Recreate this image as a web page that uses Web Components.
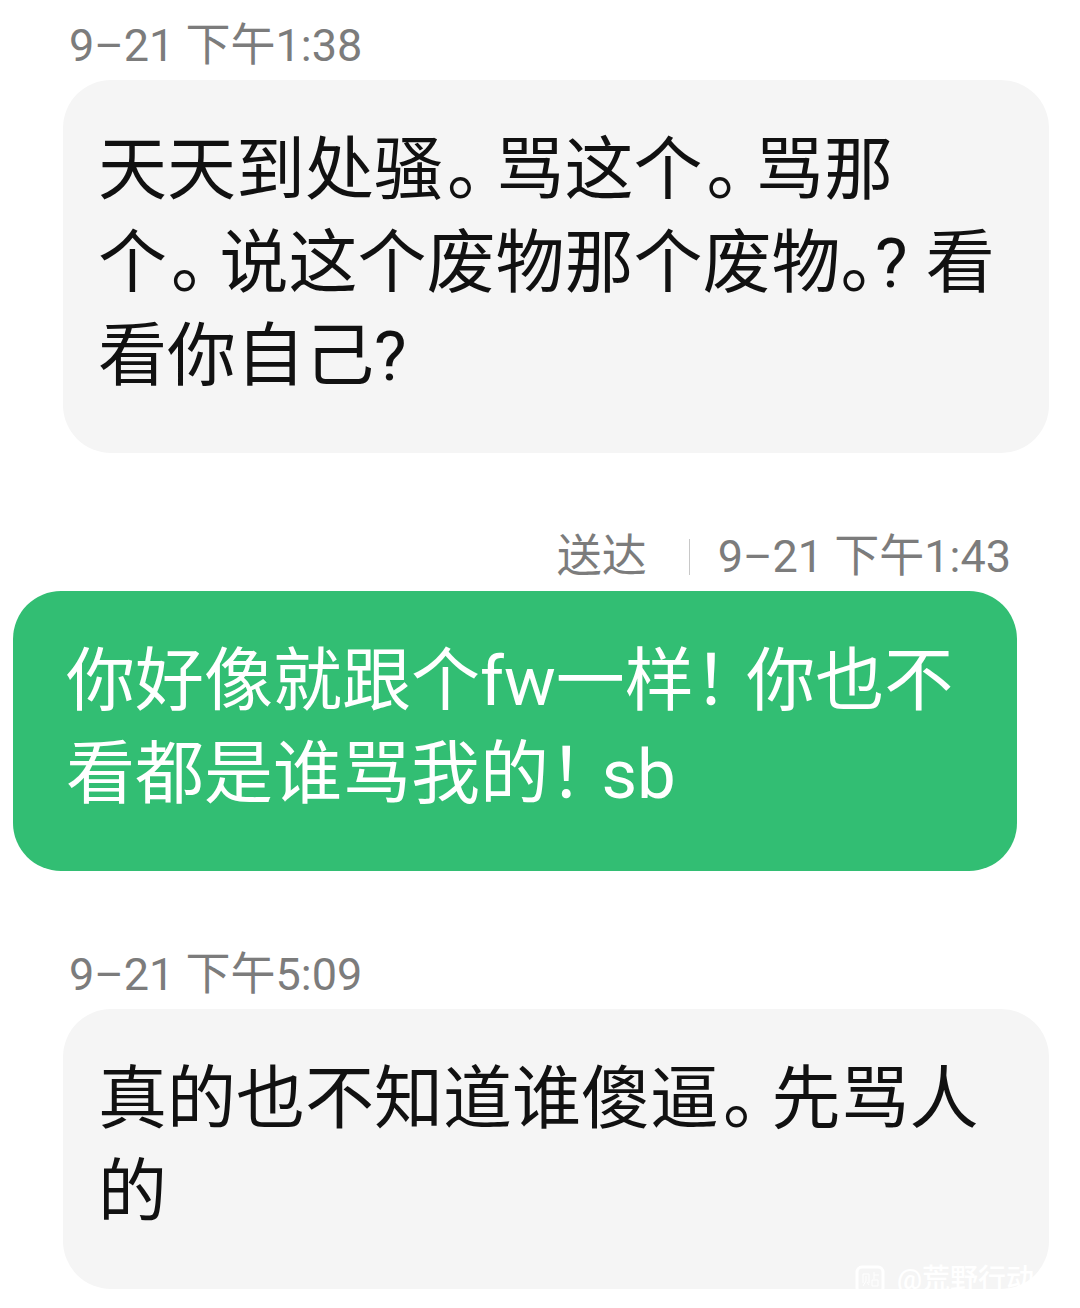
<!DOCTYPE html>
<html lang="zh-CN">
<head>
  <meta charset="UTF-8">
  <meta name="viewport" content="width=device-width, initial-scale=1.0">
  <title>短信</title>
  <style>
    body {
      margin: 0;
      background: #fff;
      font-family: Roboto, "Noto Sans CJK SC", sans-serif;
    }
  </style>
</head>
<body>
  <message-thread>
    <sms-message time="9–21 下午1:38">天天到处骚<span class="stop">。</span>骂这个<span class="stop">。</span>骂那个<span class="stop">。</span>说这个废物那个废物。<span class="mark">?</span>看看你自己?</sms-message>
    <sms-message sent status="送达" time="9–21 下午1:43">你好像就跟个fw一样<span class="mark">&#xff01;</span>你也不看都是谁骂我的<span class="mark">&#xff01;</span>sb</sms-message>
    <sms-message time="9–21 下午5:09">真的也不知道谁傻逼<span class="stop">。</span>先骂人的</sms-message>
    <tieba-watermark slot="overlay">@荒野行动</tieba-watermark>
  </message-thread>

  <script>
    class MessageThread extends HTMLElement {
      connectedCallback() {
        this.attachShadow({ mode: 'open' });
        this.shadowRoot.innerHTML = `
          <style>
            :host {
              display: block;
              position: relative;
              overflow: hidden;
            }
            main {
              display: flex;
              flex-direction: column;
              gap: 76px;
              padding: 18px 0 19px;
            }
          </style>
          <main><slot></slot></main>
          <slot name="overlay"></slot>
        `;
      }
    }

    class SmsMessage extends HTMLElement {
      connectedCallback() {
        const status = this.getAttribute('status');
        this.attachShadow({ mode: 'open' });
        this.shadowRoot.innerHTML = `
          <style>
            :host {
              display: block;
              margin: 0 31px 0 63px;
            }
            :host([sent]) {
              margin: 0 63px 0 13px;
            }
            .meta {
              display: flex;
              align-items: center;
              padding: 0 6px 6px;
              color: #7c7c7c;
              font-size: 45px;
              line-height: 56px;
            }
            :host([sent]) .meta {
              justify-content: flex-end;
            }
            .status {
              padding-right: 42px;
            }
            .divider {
              width: 1px;
              height: 36px;
              margin-right: 28px;
              background: #c8c8c8;
            }
            .bubble {
              margin: 0;
              padding: 44px 35px 50px;
              border-radius: 48px;
              background: #f5f5f5;
              color: #111;
              font-size: 69px;
              line-height: 93px;
              font-feature-settings: "halt";
            }
            :host([sent]) .bubble {
              padding: 44px 53px 50px;
              background: #32be73;
              color: #fff;
            }
            /* half-width punctuation with some air after it */
            ::slotted(.stop) {
              margin: 0 14px 0 4px;
            }
            ::slotted(.mark) {
              margin-right: 18px;
            }
          </style>
          <div class="meta">
            ${status ? `<span class="status">${status}</span><span class="divider"></span>` : ''}
            <time>${this.getAttribute('time')}</time>
          </div>
          <p class="bubble"><slot></slot></p>
        `;
      }
    }

    class TiebaWatermark extends HTMLElement {
      connectedCallback() {
        this.attachShadow({ mode: 'open' });
        this.shadowRoot.innerHTML = `
          <style>
            :host {
              position: absolute;
              right: 46px;
              bottom: 10px;
              display: flex;
              align-items: center;
              gap: 12px;
              color: #fff;
              font-size: 28px;
              font-weight: 500;
              line-height: 36px;
              white-space: nowrap;
            }
            svg {
              display: block;
              width: 30px;
              height: 30px;
            }
          </style>
          <svg viewBox="0 0 30 30" fill="none" stroke="#fff" aria-hidden="true">
            <rect x="2" y="2" width="26" height="26" rx="5" stroke-width="3"/>
            <path d="M8 18V9h6v9M11 11v5l-3 5M12 17l2 3M19 7v7M19 10h5M17 15h6v6h-6z" stroke-width="1"/>
          </svg>
          <span><slot></slot></span>
        `;
      }
    }

    customElements.define('message-thread', MessageThread);
    customElements.define('sms-message', SmsMessage);
    customElements.define('tieba-watermark', TiebaWatermark);
  </script>
</body>
</html>
